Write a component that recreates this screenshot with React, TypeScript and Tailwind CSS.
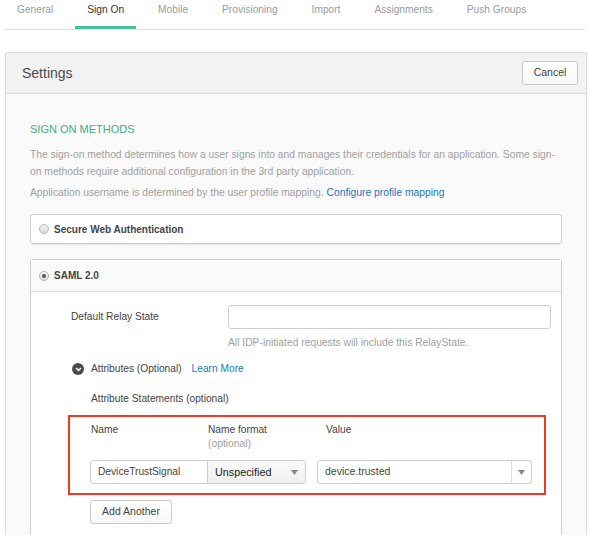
import React from "react";

const tabs = ["General", "Sign On", "Mobile", "Provisioning", "Import", "Assignments", "Push Groups"];

function Radio({ checked }: { checked?: boolean }) {
  return (
    <span className="flex h-[10px] w-[10px] items-center justify-center rounded-full border border-[#b5b5b5] bg-gradient-to-b from-[#f4f4f4] to-[#dcdcdc]">
      {checked && <span className="h-[4px] w-[4px] rounded-full bg-[#555]" />}
    </span>
  );
}

function Caret() {
  return (
    <svg width="7" height="5" viewBox="0 0 7 5">
      <path d="M0 0h7L3.5 5z" fill="#888" />
    </svg>
  );
}

export default function App() {
  return (
    <div className="min-h-[535px] bg-white text-[10.2px] text-[#333]" style={{ fontFamily: '"Liberation Sans", Arial, sans-serif' }}>
      {/* tabs */}
      <div className="mx-[4px] flex h-[30px] gap-[10px] border-b border-[#e0e0e0] pl-[1px]">
        {tabs.map((t) => (
          <div
            key={t}
            className={`flex items-start px-[12px] pt-[2px] text-[10.2px] ${
              t === "Sign On" ? "border-b-[3px] border-[#4cbf9c] text-[#333]" : "text-[#9a9a9a]"
            }`}
          >
            {t}
          </div>
        ))}
      </div>

      {/* settings panel */}
      <div className="ml-[5px] mr-[3px] mt-[22px] overflow-hidden rounded-t-[3px] border border-b-0 border-[#dadada]">
        <div className="flex h-[41px] items-center justify-between border-b border-[#dadada] bg-[#f2f2f2] pl-[16px] pr-[8px]">
          <span className="text-[14px] text-[#4a4a4a]">Settings</span>
          <button className="h-[24px] w-[56px] rounded-[3px] border border-[#c8c8c8] bg-gradient-to-b from-white to-[#f7f7f7] text-[10.5px] text-[#444]">
            Cancel
          </button>
        </div>

        <div className="bg-[#fafafa] px-[24px] pt-[28px]">
          <div className="text-[11px] uppercase leading-[14px] text-[#3fae86]">Sign On Methods</div>
          <p className="mt-[10px] text-[10.3px] leading-[17px] text-[#a0a0a0]">
            The sign-on method determines how a user signs into and manages their credentials for an application. Some sign-on methods require additional configuration in the 3rd party application.
          </p>
          <p className="mt-[4px] text-[10.3px] leading-[17px] text-[#a0a0a0]">
            Application username is determined by the user profile mapping.{" "}
            <span className="text-[#1f76bd]">Configure profile mapping</span>
          </p>

          {/* SWA */}
          <div className="mt-[13px] flex h-[30px] items-center gap-[5px] rounded-[3px] border border-[#cfcfcf] bg-white pl-[8px] shadow-[0_1px_1px_rgba(0,0,0,0.08)]">
            <Radio />
            <span className="text-[10px] font-bold text-[#444]">Secure Web Authentication</span>
          </div>

          {/* SAML */}
          <div className="mt-[15px] rounded-t-[3px] border border-b-0 border-[#cfcfcf] bg-white">
            <div className="flex h-[32px] items-center gap-[5px] border-b border-[#dcdcdc] bg-[#fafafa] pl-[8px]">
              <Radio checked />
              <span className="text-[10px] font-bold text-[#444]">SAML 2.0</span>
            </div>

            <div className="pb-[11px] pl-[37px] pr-[10px] pt-[13px]">
              <div className="flex">
                <div className="w-[160px] pl-[3px] pt-[4px] text-[#444]">Default Relay State</div>
                <div className="flex-1">
                  <div className="h-[24px] rounded-[3px] border border-[#cfcfcf] bg-white" />
                  <div className="mt-[6px] text-[10.3px] text-[#a0a0a0]">All IDP-initiated requests will include this RelayState.</div>
                </div>
              </div>

              <div className="mt-[11px] flex items-center pl-[4px]">
                <span className="flex h-[12px] w-[12px] items-center justify-center rounded-full bg-[#4a4a4a]">
                  <svg width="7" height="5" viewBox="0 0 7 5">
                    <path d="M1 1l2.5 2.5L6 1" fill="none" stroke="white" strokeWidth="1.5" />
                  </svg>
                </span>
                <span className="ml-[7px] text-[#444]">Attributes (Optional)</span>
                <span className="ml-[10px] text-[#1f76bd]">Learn More</span>
              </div>

              <div className="mt-[14px] pl-[23px] text-[#444]">Attribute Statements (optional)</div>

              <div className="mt-[9px] w-[478px] border-2 border-[#f2381e] pb-[9px] pl-[20px] pr-[12px] pt-[6px]">
                <div className="flex leading-[14px] text-[#444]">
                  <div className="w-[118px] pl-[1px]">Name</div>
                  <div className="w-[118px]">
                    <div>Name format</div>
                    <div className="text-[10.3px] text-[#a0a0a0]">(optional)</div>
                  </div>
                  <div>Value</div>
                </div>
                <div className="mt-[9px] flex h-[24px]">
                  <div className="flex w-[118px] items-center rounded-l-[3px] border border-[#cfcfcf] bg-white pl-[7px] text-[#444]">
                    DeviceTrustSignal
                  </div>
                  <div className="-ml-px flex w-[99px] items-center justify-between rounded-r-[3px] border border-[#cfcfcf] bg-gradient-to-b from-[#fafafa] to-[#efefef] pl-[7px] pr-[7px] text-[#222]">
                    <span className="text-[10.8px]">Unspecified</span>
                    <Caret />
                  </div>
                  <div className="ml-[11px] flex flex-1 rounded-[3px] border border-[#cfcfcf] bg-white">
                    <div className="flex flex-1 items-center pl-[7px] text-[10.5px] text-[#444]">device.trusted</div>
                    <div className="flex w-[20px] items-center justify-center border-l border-[#dcdcdc]">
                      <Caret />
                    </div>
                  </div>
                </div>
              </div>

              <button className="ml-[22px] mt-[5px] h-[24px] w-[82px] rounded-[3px] border border-[#c8c8c8] bg-gradient-to-b from-white to-[#f7f7f7] text-[10.5px] text-[#444]">
                Add Another
              </button>
            </div>
          </div>
        </div>
      </div>
    </div>
  );
}
